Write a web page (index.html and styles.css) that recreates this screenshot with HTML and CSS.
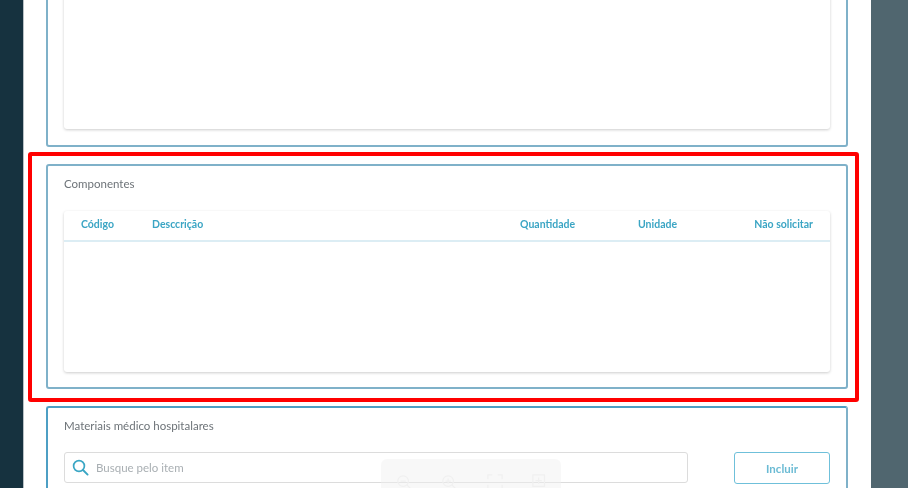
FILE: index.html
```html
<!DOCTYPE html>
<html lang="pt">
<head>
<meta charset="utf-8">
<title>Componentes</title>
<link rel="stylesheet" href="styles.css">
</head>
<body>
<div class="backdrop">
  <main class="modal">
    <section class="panel panel-first">
      <div class="card card-first"></div>
    </section>
    <section class="panel panel-components">
      <h2 class="panel-title">Componentes</h2>
      <div class="card card-table">
        <div class="table-head">
          <span class="col col-code">Código</span>
          <span class="col col-desc">Desccrição</span>
          <span class="col col-qty">Quantidade</span>
          <span class="col col-unit">Unidade</span>
          <span class="col col-skip">Não solicitar</span>
        </div>
      </div>
    </section>
    <section class="panel panel-materials">
      <h2 class="panel-title">Materiais médico hospitalares</h2>
      <div class="search-row">
        <div class="search">
          <svg class="search-icon" width="17" height="17" viewBox="0 0 17 17" fill="none"><circle cx="7" cy="7" r="5.4" stroke="#3aa6c4" stroke-width="1.7"/><path d="M11 11l4.6 4.6" stroke="#3aa6c4" stroke-width="1.9" stroke-linecap="round"/></svg>
          <span class="search-text">Busque pelo item</span>
        </div>
        <button class="btn-include">Incluir</button>
      </div>
    </section>
  </main>
</div>
<div class="highlight"></div>
<div class="viewer-tools">
  <svg width="16" height="16" viewBox="0 0 18 18" fill="none"><circle cx="8" cy="8" r="6" stroke="#f0f0f0" stroke-width="1.4"/><path d="M5 8h6M12.5 12.5l4.5 4.5" stroke="#f0f0f0" stroke-width="1.4"/></svg>
  <svg width="16" height="16" viewBox="0 0 18 18" fill="none"><circle cx="8" cy="8" r="6" stroke="#f0f0f0" stroke-width="1.4"/><path d="M5 8h6M8 5v6M12.5 12.5l4.5 4.5" stroke="#f0f0f0" stroke-width="1.4"/></svg>
  <svg width="16" height="16" viewBox="0 0 18 18" fill="none"><path d="M1 6V1h5M12 1h5v5M17 12v5h-5M6 17H1v-5" stroke="#f0f0f0" stroke-width="1.4"/></svg>
  <svg width="16" height="16" viewBox="0 0 18 18" fill="none"><path d="M1 1h13v13H1zM7.5 4v7M4 7.5h7" stroke="#f0f0f0" stroke-width="1.4"/></svg>
</div>
</body>
</html>
```

FILE: styles.css
```css
* { box-sizing: border-box; }
html, body { margin: 0; height: 100%; overflow: hidden; }
body {
  position: relative;
  width: 908px;
  height: 488px;
  font-family: "Lato", "Noto Sans", sans-serif;
  background: #50666f;
}
.backdrop {
  height: 488px;
  overflow: hidden;
  background: linear-gradient(#16323f, #16323f) left top / 23px 100% no-repeat;
  filter: blur(.35px);
}
.modal {
  width: 848px;
  margin-left: 23px;
  margin-top: -20px;
  padding: 0 22px;
  background: #fff;
  border-left: 1px solid #b9c1c5;
  display: flex;
  flex-direction: column;
  gap: 17px;
}
.panel {
  width: 802px;
  border: 2px solid #7fb1c9;
  border-radius: 3px;
  padding: 0 16px;
  flex: none;
}
.panel-first { height: 167px; }
.panel-components { height: 225px; }
.panel-materials { height: 120px; border-color: #4d9fc4 #7fb1c9 #7fb1c9 #4d9fc4; }
.panel-title {
  margin: 0;
  padding-top: 10px;
  font-size: 11.5px;
  line-height: 15px;
  font-weight: 400;
  color: #6d7378;
}
.card {
  background: #fff;
  border-radius: 3px;
  box-shadow: 0 1px 3px rgba(0, 0, 0, .2);
}
.card-first { height: 146px; margin-top: 1px; }
.card-table { height: 161px; margin-top: 20px; }
.table-head {
  height: 31px;
  border-bottom: 2px solid #dcedf4;
  display: grid;
  grid-template-columns: 71px 368px 118px 116px 1fr;
  align-items: center;
  padding: 0 17px 3px;
}
.col {
  font-size: 10.5px;
  font-weight: 700;
  color: #3ba5c4;
  white-space: nowrap;
}
.col-skip { text-align: right; }
.search-row {
  display: flex;
  justify-content: space-between;
  margin-top: 19px;
}
.search {
  width: 624px;
  height: 31px;
  border: 1px solid #dcdcdc;
  border-radius: 3px;
  display: flex;
  align-items: center;
  padding-left: 7px;
  gap: 7px;
}
.search-icon { flex: none; }
.search-text { font-size: 11.5px; color: #a9afb3; }
.btn-include {
  width: 96px;
  height: 32px;
  background: #fff;
  border: 1px solid #6fc0da;
  border-radius: 3px;
  font: 700 11.5px "Lato", sans-serif;
  color: #6bbbd4;
}
.highlight {
  position: absolute;
  left: 28px;
  top: 152px;
  width: 831px;
  height: 250px;
  border: 4px solid #ff0000;
  border-radius: 3px;
}
.viewer-tools {
  position: absolute;
  left: 381px;
  top: 459px;
  width: 180px;
  height: 29px;
  padding: 15px 13px 0 15px;
  border-radius: 6px 6px 0 0;
  background: rgba(240, 240, 240, .45);
  display: flex;
  justify-content: space-between;
}
```
